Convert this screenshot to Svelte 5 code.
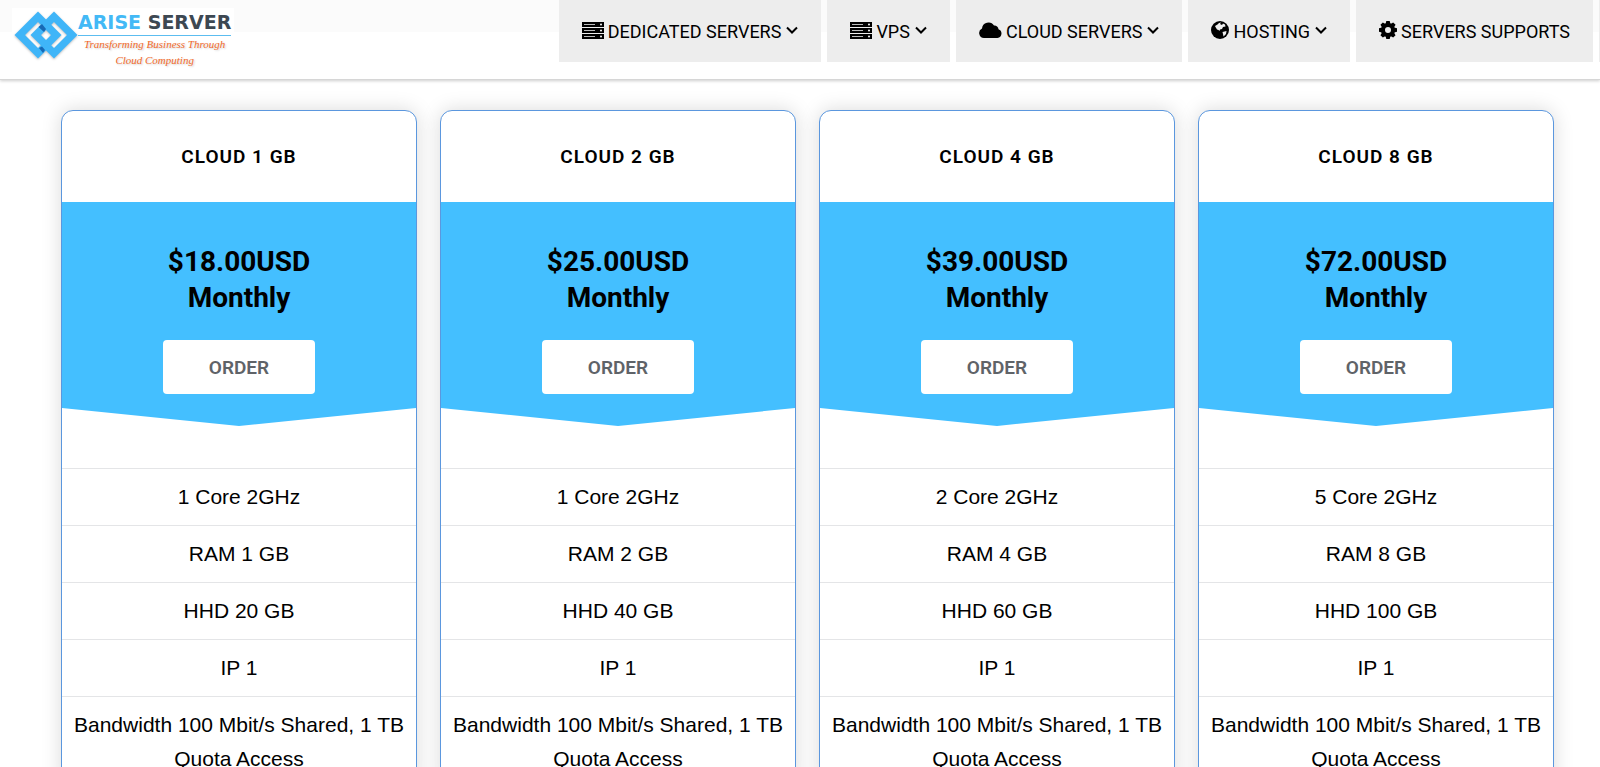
<script lang="ts">
  type NavItem = { label: string; icon: 'server' | 'cloud' | 'globe' | 'gear'; dropdown: boolean };

  const navItems: NavItem[] = [
    { label: 'DEDICATED SERVERS', icon: 'server', dropdown: true },
    { label: 'VPS', icon: 'server', dropdown: true },
    { label: 'CLOUD SERVERS', icon: 'cloud', dropdown: true },
    { label: 'HOSTING', icon: 'globe', dropdown: true },
    { label: 'SERVERS SUPPORTS', icon: 'gear', dropdown: false }
  ];

  const bandwidth = 'Bandwidth 100 Mbit/s Shared, 1 TB Quota Access';

  const plans = [
    { name: 'CLOUD 1 GB', price: '$18.00USD', features: ['1 Core 2GHz', 'RAM 1 GB', 'HHD 20 GB', 'IP 1', bandwidth] },
    { name: 'CLOUD 2 GB', price: '$25.00USD', features: ['1 Core 2GHz', 'RAM 2 GB', 'HHD 40 GB', 'IP 1', bandwidth] },
    { name: 'CLOUD 4 GB', price: '$39.00USD', features: ['2 Core 2GHz', 'RAM 4 GB', 'HHD 60 GB', 'IP 1', bandwidth] },
    { name: 'CLOUD 8 GB', price: '$72.00USD', features: ['5 Core 2GHz', 'RAM 8 GB', 'HHD 100 GB', 'IP 1', bandwidth] }
  ];
</script>

<header>
  <a class="logo" href="/" aria-label="Arise Server">
    <svg width="66" height="54" viewBox="12 8 66 54" aria-hidden="true">
      <g fill="#3fb5f8" fill-rule="evenodd">
        <path d="M38 11.500 61.500 35 38 58.500 14.500 35ZM38 22 25 35 38 48 51 35Z" />
        <path d="M54 11.500 77.500 35 54 58.500 30.500 35ZM54 22 41 35 54 48 67 35Z" />
      </g>
      <path fill="#1769b5" d="M38.500 27 42 24 46 29 44 32ZM39 48 42 46.500 45 50 43 53Z" />
    </svg>
    <span class="brand">
      <span class="name"><b>ARISE</b> SERVER</span>
      <span class="tagline">Transforming Business Through<br />Cloud Computing</span>
    </span>
  </a>

  <nav>
    {#each navItems as item}
      <a href="/">
        {#if item.icon === 'server'}
          <svg width="22" height="17" viewBox="0 0 22 17" aria-hidden="true">
            {#each [0, 6, 12] as y}
              <rect x="0" {y} width="22" height="5" />
              <path d="M2 {y + 2}h11v1H2z" fill="#bbb" />
              <circle cx="19" cy={y + 2.5} r="1" fill="#fff" />
            {/each}
          </svg>
        {:else if item.icon === 'cloud'}
          <svg width="23" height="16" viewBox="0 0 23 16" aria-hidden="true">
            <path d="M5 16A5 5 0 0 1 3 6.500 6.500 6.500 0 0 1 15 3.500 4 4 0 0 1 19.500 7.300 4.500 4.500 0 0 1 18.500 16Z" />
          </svg>
        {:else if item.icon === 'globe'}
          <svg width="18" height="18" viewBox="0 0 18 18" aria-hidden="true">
            <circle cx="9" cy="9" r="9" />
            <path fill="#eee" d="M8 2 10 1.500 9 3 11 4 12 2.500 14 3.500 14.500 5.500 12 6 11 8 9 8.500 8.500 10 7.500 9 6 8.500 4.500 6 4 5 6.500 3.500ZM11.500 11 15.500 10 15 13 12.500 15.500 12 13Z" />
          </svg>
        {:else}
          <svg width="18" height="18" viewBox="0 0 18 18" aria-hidden="true">
            <circle cx="9" cy="9" r="5" fill="none" stroke="#000" stroke-width="4" />
            {#each [0, 45, 90, 135] as angle}
              <path d="M7.300 0h3.400l1 4H6.300zM6.300 14h5.400l-1 4H7.300z" transform="rotate({angle} 9 9)" />
            {/each}
          </svg>
        {/if}
        <span>{item.label}</span>
        {#if item.dropdown}
          <svg class="caret" width="12" height="8" viewBox="0 0 12 8" aria-hidden="true">
            <path d="M1 1.500 6 6.500 11 1.500" fill="none" stroke="#000" stroke-width="2" />
          </svg>
        {/if}
      </a>
    {/each}
  </nav>
</header>

<main>
  {#each plans as plan}
    <article>
      <h2>{plan.name}</h2>
      <div class="price">
        <p>{plan.price}<br />Monthly</p>
        <button type="button">ORDER</button>
      </div>
      <ul>
        {#each plan.features as feature}
          <li>{feature}</li>
        {/each}
      </ul>
    </article>
  {/each}
</main>

<style>
  :global(body) {
    background: #fff;
    color: #000;
    font-family: Roboto, "Liberation Sans", sans-serif;
  }

  header {
    display: flex;
    align-items: flex-start;
    height: 79px;
    background: linear-gradient(#fbfbfb 32px, #fff 32px);
    border-bottom: 1px solid #d6d6d6;
    box-shadow: 0 1px 3px rgba(0, 0, 0, 0.2);
  }

  .logo {
    display: flex;
    margin: 8px 0 0 12px;
    padding-right: 3px;
    background: #fff;
    text-decoration: none;
  }

  .logo svg {
    filter: drop-shadow(0 1px 1px rgba(0, 0, 0, 0.25));
  }

  .brand {
    display: flex;
    flex-direction: column;
    padding-top: 2px;
    white-space: nowrap;
  }

  .name {
    border-bottom: 1px solid #5cbdf0;
    color: #3d4852;
    font: bold 19px/25px "DejaVu Sans", sans-serif;
  }

  .name b {
    color: #43b9f6;
  }

  .tagline {
    color: #f26a2a;
    font: italic 11px/16px "Liberation Serif", serif;
    text-align: center;
    text-shadow: 1px 1px 2px rgba(0, 0, 0, 0.2);
  }

  nav {
    display: flex;
    flex: 1;
    justify-content: flex-end;
    gap: 6px;
  }

  /* leading edge of the next tab */
  nav::after {
    width: 1px;
    height: 62px;
    background: #ededed;
    content: "";
  }

  nav a {
    display: flex;
    align-items: center;
    gap: 4px;
    height: 62px;
    padding: 0 23px;
    box-sizing: border-box;
    background: #ededed;
    color: #000;
    font-size: 18px;
    text-decoration: none;
    white-space: nowrap;
  }

  nav svg {
    margin-bottom: 2px;
  }

  .caret {
    margin-left: 1px;
  }

  main {
    display: grid;
    grid-template-columns: repeat(4, 1fr);
    gap: 23px;
    padding: 30px 46px 30px 61px;
  }

  article {
    border: 1px solid #5b97de;
    border-radius: 12px;
    background: #fff;
    box-shadow: 0 0 20px rgba(0, 0, 0, 0.15);
    overflow: hidden;
    text-align: center;
  }

  h2 {
    margin: 0;
    font-size: 19px;
    font-weight: 600;
    letter-spacing: 1px;
    line-height: 91px;
  }

  .price {
    height: 224px;
    padding-top: 42px;
    box-sizing: border-box;
    background: #44bfff;
    clip-path: polygon(0 0, 100% 0, 100% 206px, 50% 100%, 0 206px);
  }

  .price p {
    margin: 0 0 24px;
    font-size: 28px;
    font-weight: 700;
    line-height: 36px;
  }

  button {
    width: 152px;
    height: 54px;
    border: 0;
    border-radius: 4px;
    background: #fff;
    color: #5f6368;
    font: 600 19px Roboto, sans-serif;
  }

  ul {
    margin: 42px 0 0;
    padding: 0;
    list-style: none;
  }

  li {
    padding: 11px 10px;
    border-top: 1px solid #e4e5e7;
    font: 21px/34px "Liberation Sans", Arial, sans-serif;
  }
</style>
